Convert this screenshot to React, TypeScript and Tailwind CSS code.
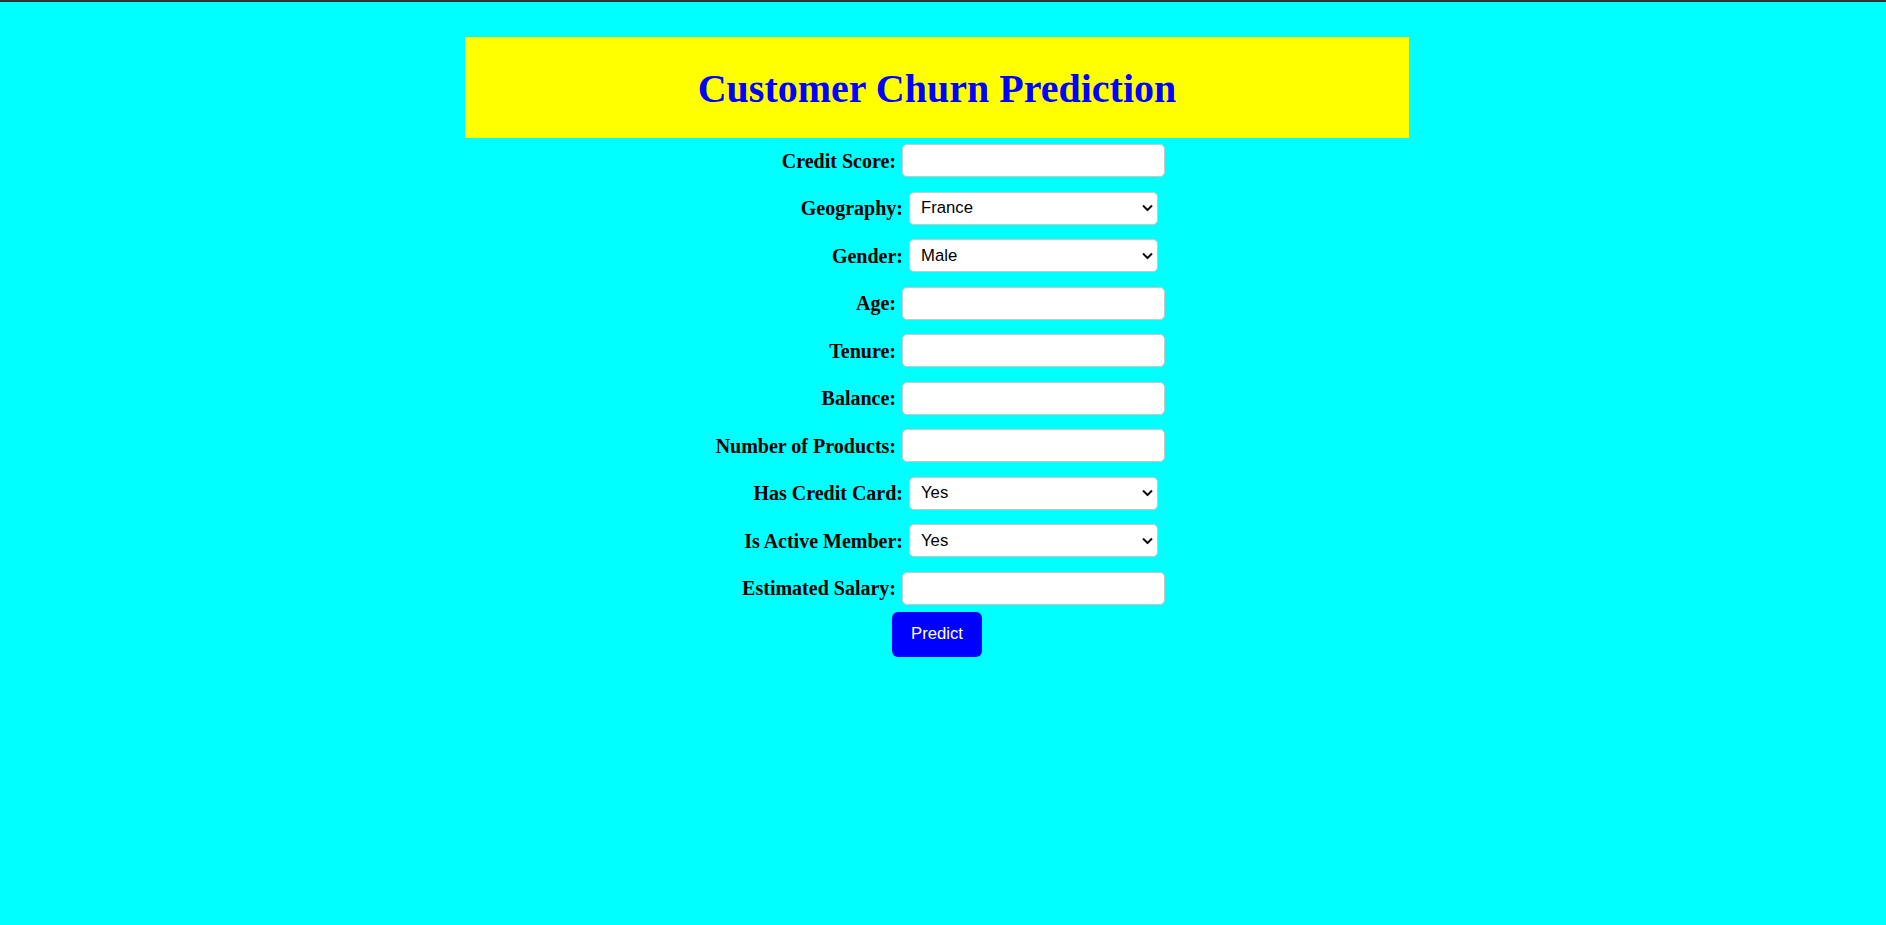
const serif = { fontFamily: '"Liberation Serif", "Times New Roman", serif' };

type Field =
  | { label: string; kind: "input" }
  | { label: string; kind: "select"; options: string[] };

const fields: Field[] = [
  { label: "Credit Score:", kind: "input" },
  { label: "Geography:", kind: "select", options: ["France", "Spain", "Germany"] },
  { label: "Gender:", kind: "select", options: ["Male", "Female"] },
  { label: "Age:", kind: "input" },
  { label: "Tenure:", kind: "input" },
  { label: "Balance:", kind: "input" },
  { label: "Number of Products:", kind: "input" },
  { label: "Has Credit Card:", kind: "select", options: ["Yes", "No"] },
  { label: "Is Active Member:", kind: "select", options: ["Yes", "No"] },
  { label: "Estimated Salary:", kind: "input" },
];

function Chevron() {
  return (
    <svg
      className="pointer-events-none absolute right-[5px] top-1/2 -translate-y-1/2"
      width="11"
      height="7"
      viewBox="0 0 11 7"
      fill="none"
    >
      <path d="M1 1l4.5 4.5L10 1" stroke="#111" strokeWidth="2" />
    </svg>
  );
}

function Row({ field }: { field: Field }) {
  return (
    <div className="flex items-center justify-center">
      <label
        className="w-[187px] text-right text-[20px] font-bold leading-none text-black"
        style={serif}
      >
        {field.label}
      </label>
      {field.kind === "input" ? (
        <input
          type="text"
          className="ml-[6px] h-[33px] w-[263px] rounded-[5px] border border-[#c8c8c8] bg-white px-2 outline-none"
        />
      ) : (
        <div className="relative ml-[6px]">
          <select
            className="h-[33px] w-[249px] appearance-none rounded-[5px] border border-[#c8c8c8] bg-white pl-[11px] text-[16.7px] text-black outline-none font-['Liberation_Sans',Arial,sans-serif]"
            defaultValue={field.options[0]}
          >
            {field.options.map((o) => (
              <option key={o}>{o}</option>
            ))}
          </select>
          <Chevron />
        </div>
      )}
    </div>
  );
}

export default function App() {
  return (
    <div className="min-h-[925px] border-t-2 border-[#333333] bg-[#00ffff]">
      <div className="pr-[12px]">
        <div className="mx-auto mt-[35px] flex h-[101px] w-[944px] items-center justify-center bg-[#ffff00]">
          <h1 className="mt-[2px] text-[40px] font-bold text-[#0000ff]" style={serif}>
            Customer Churn Prediction
          </h1>
        </div>
        <form className="mt-[6px] flex flex-col" onSubmit={(e) => e.preventDefault()}>
          <div className="flex flex-col gap-[14.5px]">
            {fields.map((f) => (
              <Row key={f.label} field={f} />
            ))}
          </div>
          <div className="mt-[7px] flex justify-center">
            <button
              type="submit"
              className="h-[45px] w-[90px] rounded-[6px] bg-[#0000ff] text-[16.7px] text-white font-['Liberation_Sans',Arial,sans-serif]"
            >
              Predict
            </button>
          </div>
        </form>
      </div>
    </div>
  );
}
